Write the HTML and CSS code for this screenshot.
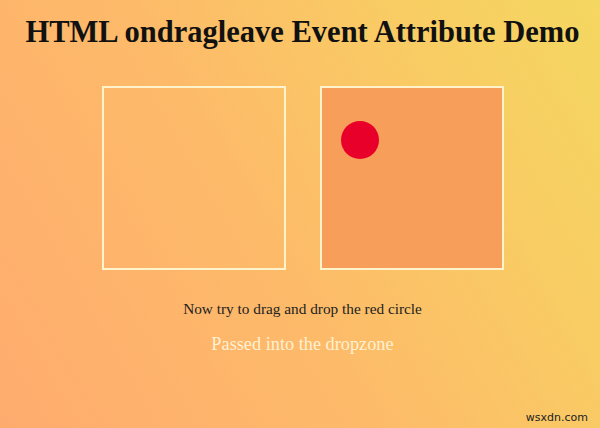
FILE: index.html
```html
<!DOCTYPE html>
<html>
<head>
<meta charset="utf-8">
<link rel="stylesheet" href="styles.css">
</head>
<body>
<div class="page">
  <h1 class="title">HTML ondragleave Event Attribute Demo</h1>
  <div class="zones">
    <div class="zone"></div>
    <div class="zone zone-active">
      <div class="circle"></div>
    </div>
  </div>
  <p class="hint">Now try to drag and drop the red circle</p>
  <p class="status">Passed into the dropzone</p>
  <div class="mark">wsxdn.com</div>
</div>
</body>
</html>
```
FILE: styles.css
```css
html, body {
  margin: 0;
  padding: 0;
}
.page {
  width: 600px;
  height: 428px;
  box-sizing: border-box;
  padding-left: 5px;
  position: relative;
  overflow: hidden;
  background: linear-gradient(60deg, #ffab6f 0%, #fdbb69 45%, #f9cc64 75%, #f4d760 100%);
  font-family: "Liberation Serif", "Times New Roman", serif;
  display: flex;
  flex-direction: column;
  align-items: center;
}
.title {
  margin: 15px 0 0 0;
  font-size: 30.5px;
  line-height: 34px;
  font-weight: bold;
  color: #111;
  white-space: nowrap;
}
.zones {
  display: flex;
  gap: 34px;
  margin-top: 37px;
}
.zone {
  width: 180px;
  height: 180px;
  border: 2px solid #fff3cc;
}
.zone-active {
  background: #f69e5a;
}
.circle {
  width: 38px;
  height: 38px;
  border-radius: 50%;
  background: #e8002a;
  margin: 33px 0 0 19px;
}
.hint {
  margin: 30px 0 0 0;
  font-size: 15.3px;
  line-height: 18px;
  color: #222;
}
.status {
  margin: 15px 0 0 0;
  font-size: 18.3px;
  line-height: 22px;
  color: #fff1d2;
}
.mark {
  position: absolute;
  right: 12px;
  bottom: 4px;
  font-family: "DejaVu Sans", sans-serif;
  font-size: 11px;
  color: #222;
}
```
